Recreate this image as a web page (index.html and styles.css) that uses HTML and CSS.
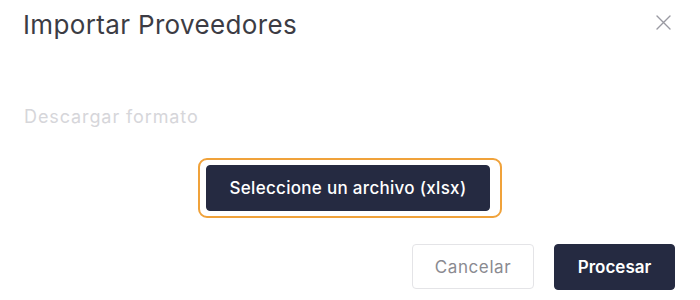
FILE: index.html
```html
<!DOCTYPE html>
<html lang="es">
<head>
<meta charset="utf-8">
<title>Importar Proveedores</title>
<link rel="stylesheet" href="styles.css">
</head>
<body>
<div class="modal">
  <div class="modal-header">
    <h2 class="modal-title">Importar Proveedores</h2>
    <button class="close-btn" aria-label="Cerrar">
      <svg width="15" height="15" viewBox="0 0 15 15"><path d="M1 1 L14 14 M14 1 L1 14" stroke="#9a9aa2" stroke-width="1.4" fill="none" stroke-linecap="round"/></svg>
    </button>
  </div>
  <div class="modal-body">
    <a class="download-link">Descargar formato</a>
    <div class="upload-row">
      <div class="focus-ring">
        <button class="btn btn-dark btn-file">Seleccione un archivo (xlsx)</button>
      </div>
    </div>
  </div>
  <div class="modal-footer">
    <button class="btn btn-light">Cancelar</button>
    <button class="btn btn-dark btn-proc">Procesar</button>
  </div>
</div>
</body>
</html>
```
FILE: styles.css
```css
* { box-sizing: border-box; }
html, body { margin: 0; padding: 0; background: #fff; }
body { font-family: "Inter", "Noto Sans", sans-serif; width: 700px; height: 300px; overflow: hidden; }
.modal { width: 700px; height: 300px; display: flex; flex-direction: column; }
.modal-header { display: flex; justify-content: space-between; align-items: flex-start; padding: 8px 29px 0 23px; height: 48px; }
.modal-title { margin: 0; font-weight: 400; font-size: 26px; color: #3c3c44; letter-spacing: 0.35px; line-height: 34px; }
.close-btn { background: none; border: 0; padding: 0; margin-top: 7px; width: 15px; height: 15px; display: flex; }
.modal-body { padding: 0 24px; }
.download-link { display: block; margin-top: 57px; font-size: 18px; color: #d6d6da; line-height: 24px; letter-spacing: 0.9px; }
.upload-row { display: flex; justify-content: center; margin-top: 29px; }
.focus-ring { border: 2px solid #f0a23a; border-radius: 9px; padding: 5px 10px 5px 6px; display: flex; }
.btn { font-family: inherit; font-size: 17px; border-radius: 4px; cursor: pointer; height: 46px; display: flex; align-items: center; justify-content: center; }
.btn-dark { background: #252a41; color: #fff; border: 1px solid #252a41; font-weight: 500; }
.btn-file { width: 284px; letter-spacing: 0.3px; }
.modal-footer { display: flex; justify-content: flex-end; gap: 20px; padding: 0 25px 0 0; margin-top: 26px; }
.btn-light { background: #fff; color: #8a8a90; border: 1px solid #e4e4e7; width: 122px; height: 45px; letter-spacing: 0.6px; }
.btn-proc { width: 121px; font-weight: 600; }
```
